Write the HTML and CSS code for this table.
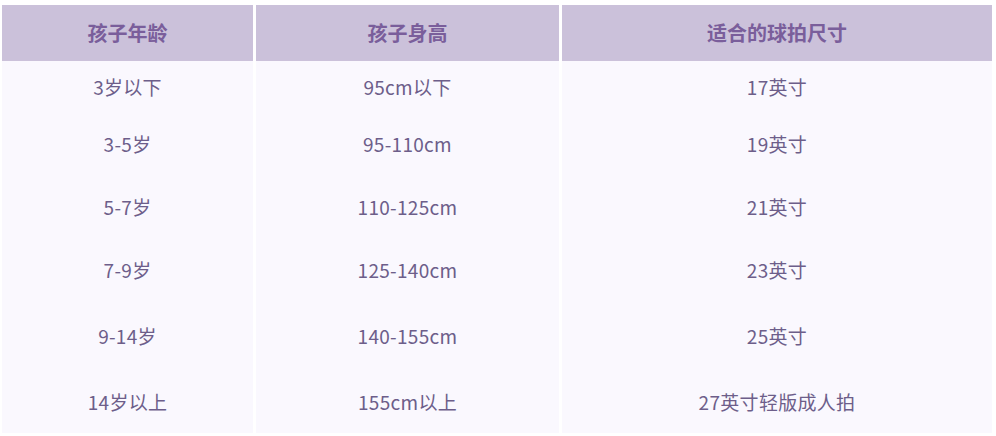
FILE: index.html
```html
<!DOCTYPE html>
<html lang="zh">
<head>
<meta charset="utf-8">
<link rel="stylesheet" href="styles.css">
</head>
<body>
<table class="size-table">
  <thead>
    <tr>
      <th class="c1">孩子年龄</th>
      <th class="c2">孩子身高</th>
      <th class="c3">适合的球拍尺寸</th>
    </tr>
  </thead>
  <tbody>
    <tr class="r1"><td>3岁以下</td><td>95cm以下</td><td>17英寸</td></tr>
    <tr class="r2"><td>3-5岁</td><td>95-110cm</td><td>19英寸</td></tr>
    <tr class="r3"><td>5-7岁</td><td>110-125cm</td><td>21英寸</td></tr>
    <tr class="r4"><td>7-9岁</td><td>125-140cm</td><td>23英寸</td></tr>
    <tr class="r5"><td>9-14岁</td><td>140-155cm</td><td>25英寸</td></tr>
    <tr class="r6"><td>14岁以上</td><td>155cm以上</td><td>27英寸轻版成人拍</td></tr>
  </tbody>
</table>
</body>
</html>
```

FILE: styles.css
```css
html, body {
  margin: 0;
  padding: 0;
  background: #ffffff;
}
body {
  padding: 5px 0 0 2px;
  font-family: "Noto Sans CJK SC", "Noto Sans", sans-serif;
}
.size-table {
  border-collapse: separate;
  border-spacing: 3px 0;
  margin-left: -3px;
  table-layout: fixed;
  width: 996px;
}
.size-table th, .size-table td {
  padding: 0;
  text-align: center;
  vertical-align: middle;
}
.size-table th {
  background: #cbc1da;
  color: #7a5e9b;
  font-size: 20px;
  font-weight: 700;
  height: 54px;
  padding-bottom: 2px;
}
.size-table td {
  background: #faf8fe;
  color: #6d5e8a;
  font-size: 19px;
  font-weight: 400;
  letter-spacing: 0.3px;
  padding-bottom: 2px;
}
.c1 { width: 251px; }
.c2 { width: 303px; }
.c3 { width: 430px; }
.r1 td { height: 50px; }
.r2 td { height: 60px; }
.r3 td { height: 62px; }
.r4 td { height: 60px; }
.r5 td { height: 68px; }
.r6 td { height: 60px; }
```
